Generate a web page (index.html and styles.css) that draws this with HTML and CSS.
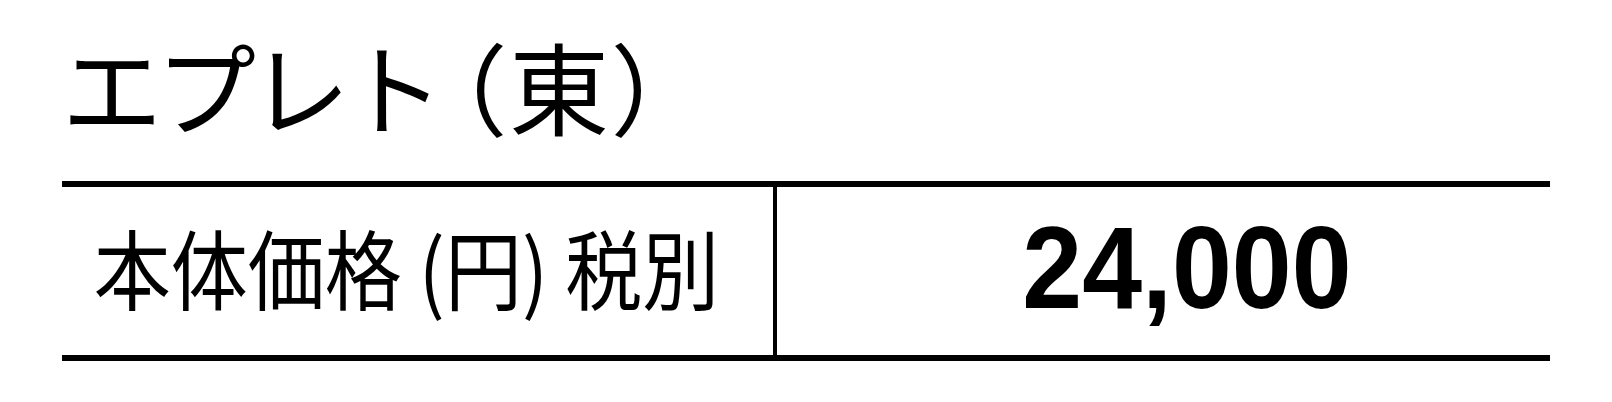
FILE: index.html
```html
<!DOCTYPE html>
<html lang="ja">
<head>
<meta charset="utf-8">
<title>エプレト（東）</title>
<link rel="stylesheet" href="styles.css">
</head>
<body>
<main class="page">
  <h1 class="title"><span class="title-name">エプレト</span><span class="title-area">（東）</span></h1>
  <div class="spec">
    <div class="spec-label"><span class="label-text">本体価格 (円) 税別</span></div>
    <div class="spec-value"><span class="value-text">24,000</span></div>
  </div>
</main>
</body>
</html>
```

FILE: styles.css
```css
html, body {
  margin: 0;
  padding: 0;
  background: #fff;
  color: #000;
}

.page {
  padding: 0 62px;
  font-family: "Noto Sans CJK JP", "Noto Sans", sans-serif;
}

.title {
  margin: 0 0 46px;
  padding-top: 35px;
  font-size: 100px;
  font-weight: 400;
  line-height: 1;
  white-space: nowrap;
}

.title-name {
  letter-spacing: -6px;
}

.title-area {
  margin-left: 16px;
  letter-spacing: 5px;
  font-feature-settings: "palt";
}

.spec {
  display: grid;
  grid-template-columns: 715px 1fr;
  height: 168px;
  border-top: 6px solid #000;
  border-bottom: 6px solid #000;
}

.spec-label {
  display: flex;
  align-items: center;
  justify-content: center;
  border-right: 4px solid #000;
  padding-right: 22px;
  padding-bottom: 10px;
  font-size: 87px;
  line-height: 1;
}

.label-text {
  display: inline-block;
  white-space: pre;
  transform: scaleX(0.885);
}

.spec-value {
  display: flex;
  align-items: center;
  justify-content: center;
  padding-left: 46px;
  padding-bottom: 8px;
  font-family: "Liberation Sans", Arial, sans-serif;
  font-weight: 700;
  font-size: 117px;
  line-height: 1;
}

.value-text {
  display: inline-block;
  white-space: nowrap;
  transform: scaleX(0.92);
}
```
